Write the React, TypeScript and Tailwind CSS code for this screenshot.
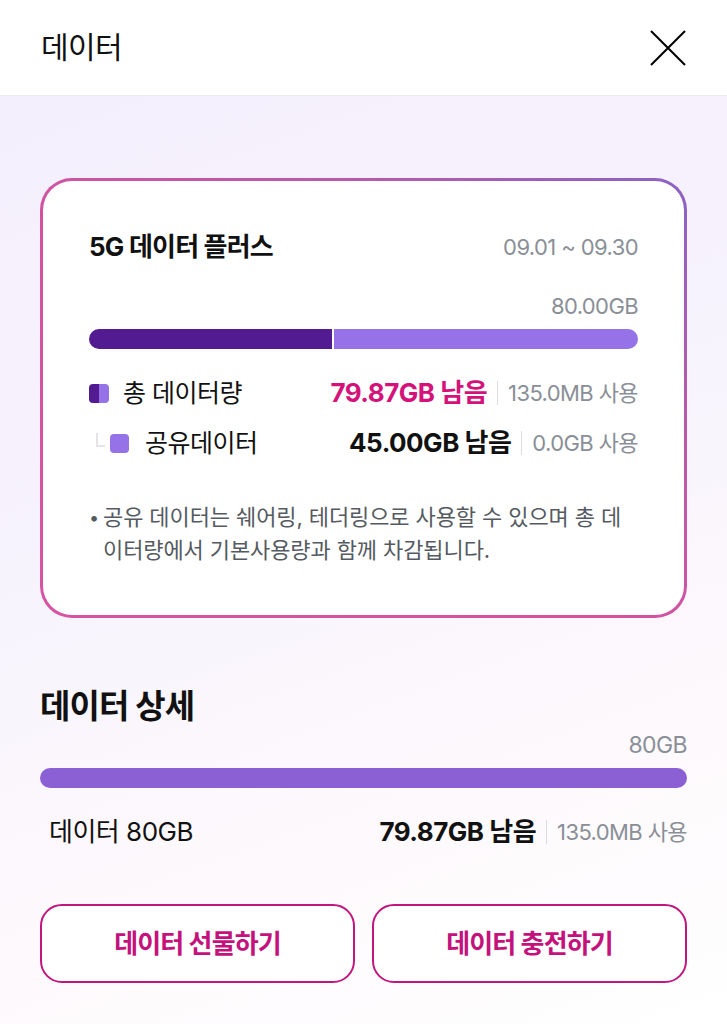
import React from "react";

const font = { fontFamily: '"Inter", "Noto Sans CJK KR", sans-serif' };

function Sep() {
  return <span className="mx-[10px] inline-block h-[24px] w-px bg-[#dcdde0] align-middle" />;
}

export default function App() {
  return (
    <div
      style={font}
      className="min-h-[1024px] w-full bg-[linear-gradient(160deg,#f3eefc_0%,#f7f3fd_45%,#fdf9fc_75%,#ffffff_100%)] text-[#111]"
    >
      <header className="flex h-[96px] items-center justify-between border-b border-[#ececef] bg-white pl-[41px] pr-[40px]">
        <h1 className="text-[30px] font-normal tracking-[-0.6px] text-[#111]">데이터</h1>
        <svg width="38" height="38" viewBox="0 0 38 38" className="text-black">
          <path d="M2 2 L36 36 M36 2 L2 36" stroke="currentColor" strokeWidth="2" fill="none" />
        </svg>
      </header>

      <main className="px-[40px] pt-[82px]">
        <div className="rounded-[32px] bg-[linear-gradient(to_bottom_left,#8a63c3_0%,#b65aad_25%,#d4529f_55%,#d655a2_100%)] p-[3px]">
          <div className="rounded-[29px] bg-white px-[46px] pb-[48px] pt-[51px]">
            <div className="flex items-center justify-between">
              <div className="text-[26px] font-bold leading-[30px] tracking-[-0.8px] text-[#111]">5G 데이터 플러스</div>
              <div className="text-[22px] leading-[30px] tracking-[-0.6px] text-[#8a8f97]">09.01 ~ 09.30</div>
            </div>
            <div className="mt-[30px] text-right text-[22px] leading-[28px] tracking-[-0.6px] text-[#8a8f97]">80.00GB</div>
            <div className="mt-[9px] flex h-[20px] overflow-hidden rounded-full">
              <div className="h-full w-[243px] bg-[#521b91]" />
              <div className="h-full w-[2px] bg-white" />
              <div className="h-full flex-1 bg-[#9572e8]" />
            </div>

            <div className="mt-[29px] flex items-center justify-between leading-[30px]">
              <div className="flex items-center">
                <span className="flex h-[19px] w-[20px] overflow-hidden rounded-[4px]">
                  <span className="h-full w-1/2 bg-[#521b91]" />
                  <span className="h-full w-1/2 bg-[#9572e8]" />
                </span>
                <span className="ml-[14px] text-[25px] tracking-[-0.5px] text-[#111]">총 데이터량</span>
              </div>
              <div className="flex items-center">
                <span className="text-[26px] font-bold tracking-[-0.5px] text-[#d4127a]">79.87GB 남음</span>
                <Sep />
                <span className="text-[22px] tracking-[-0.6px] text-[#8a8f97]">135.0MB 사용</span>
              </div>
            </div>

            <div className="mt-[20px] flex items-center justify-between leading-[30px]">
              <div className="flex items-center">
                <span className="ml-[7px] mb-[6px] h-[14px] w-[9px] border-b-[2px] border-l-[2px] border-[#e4e4e8]" />
                <span className="ml-[5px] h-[19px] w-[19px] rounded-[4px] bg-[#9572e8]" />
                <span className="ml-[16px] text-[25px] tracking-[-0.5px] text-[#111]">공유데이터</span>
              </div>
              <div className="flex items-center">
                <span className="text-[26px] font-bold tracking-[-0.5px] text-[#111]">45.00GB 남음</span>
                <Sep />
                <span className="text-[22px] tracking-[-0.6px] text-[#8a8f97]">0.0GB 사용</span>
              </div>
            </div>

            <div className="mt-[43px] flex text-[22px] leading-[33px] tracking-[-0.1px] text-[#555a61]">
              <span className="w-[14px] shrink-0 text-[18px]">•</span>
              <p className="whitespace-nowrap">
                공유 데이터는 쉐어링, 테더링으로 사용할 수 있으며 총 데
                <br />
                이터량에서 기본사용량과 함께 차감됩니다.
              </p>
            </div>
          </div>
        </div>

        <h2 className="mt-[68px] text-[33px] font-bold leading-[40px] tracking-[-0.9px] text-[#111]">데이터 상세</h2>
        <div className="mt-[5px] text-right text-[23px] leading-[28px] tracking-[-0.6px] text-[#8a8f97]">80GB</div>
        <div className="mt-[9px] h-[20px] rounded-full bg-[#8a60d4]" />
        <div className="mt-[29px] flex items-center justify-between pl-[9px] leading-[30px]">
          <span className="text-[26px] tracking-[-0.5px] text-[#111]">데이터 80GB</span>
          <div className="flex items-center">
            <span className="text-[26px] font-bold tracking-[-0.5px] text-[#111]">79.87GB 남음</span>
            <Sep />
            <span className="text-[22px] tracking-[-0.6px] text-[#8a8f97]">135.0MB 사용</span>
          </div>
        </div>

        <div className="mt-[57px] grid grid-cols-2 gap-[17px]">
          <button className="flex h-[79px] items-center justify-center rounded-[22px] border-2 border-[#c0167f] bg-white text-[26px] font-bold tracking-[-0.9px] text-[#c4117c]">
            데이터 선물하기
          </button>
          <button className="flex h-[79px] items-center justify-center rounded-[22px] border-2 border-[#c0167f] bg-white text-[26px] font-bold tracking-[-0.9px] text-[#c4117c]">
            데이터 충전하기
          </button>
        </div>
      </main>
    </div>
  );
}
